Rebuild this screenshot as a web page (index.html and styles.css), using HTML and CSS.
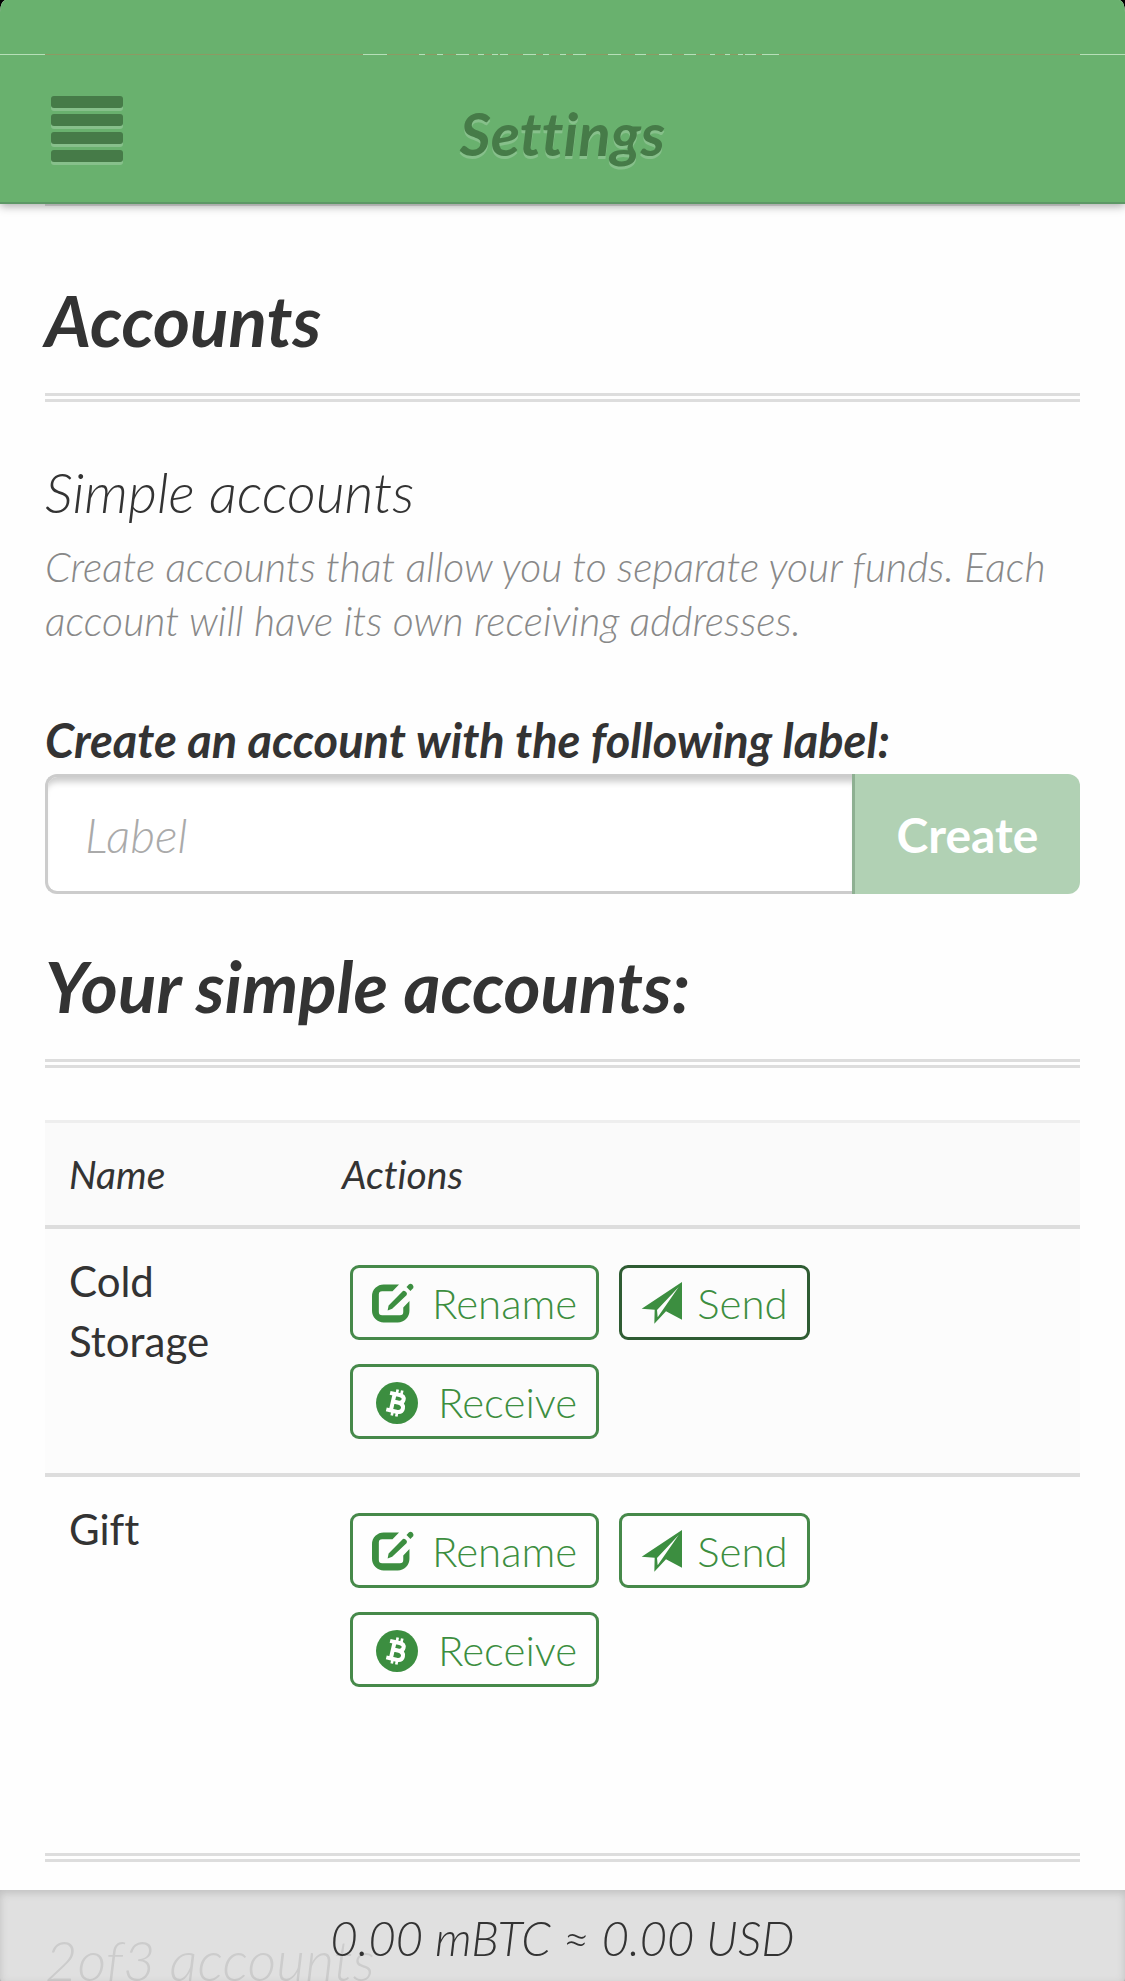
FILE: index.html
```html
<!DOCTYPE html>
<html lang="en">
<head>
    <meta charset="UTF-8">
    <meta name="viewport" content="width=device-width, initial-scale=1.0">
    <title>Settings</title>
    <link rel="stylesheet" href="styles.css">
</head>
<body>
    <!-- shared icons -->
    <svg class="sprite" aria-hidden="true">
        <symbol id="icon-edit" viewBox="0 0 129 126">
            <path d="M83 6H36A36 36 0 0 0 0 42V87A36 36 0 0 0 36 123H79A36 36 0 0 0 115 87V57L96 77V91A10 10 0 0 1 86 101H31A10 10 0 0 1 21 91V37A10 10 0 0 1 31 27H63Z"/>
            <path d="M48 86L51 71L95 26Q99 24 103 28L106 31Q109 35 106 39L62 81Z"/>
            <path d="M106 14L113 6Q118 2 124 6Q129 11 127 17L118 26Z"/>
        </symbol>
        <symbol id="icon-send" viewBox="0 0 126 126">
            <path d="M123 0L2 80L41 83L40 125L75 88L123 113ZM113 15L50 106L48 84Z" fill-rule="evenodd"/>
        </symbol>
        <symbol id="icon-bitcoin" viewBox="0 0 126 126">
            <circle cx="63" cy="63" r="63"/>
            <g transform="rotate(13 63 63)" fill="none" stroke="#fff">
                <path stroke-width="12" d="M36 38H65Q80 38 80 49Q80 61 65 61H51M65 61Q84 61 84 75Q84 89 67 89H36M50 38V89"/>
                <path stroke-width="8" d="M56 23V38M70 23V38M56 89V103M70 89V103"/>
            </g>
        </symbol>
    </svg>

    <div class="app">
        <header class="header">
            <div class="status-bar">
                <svg class="status-line" width="416" height="1" aria-hidden="true">
                    <path d="M0 .5H416" stroke="#b7dfb8" stroke-dasharray="24 32 6 12 6 13 13 9 6 8 6 2 8 15 13 7 6 11 6 7 13 22 13 14 11 13 13 12 12 14 5 10 5 8 5 2 11 6 17 9"/>
                </svg>
            </div>
            <div class="title-bar">
                <button class="menu-button" type="button" aria-label="Menu">
                    <span class="bar"></span>
                    <span class="bar"></span>
                    <span class="bar"></span>
                    <span class="bar"></span>
                </button>
                <h1 class="title">Settings</h1>
            </div>
        </header>

        <main class="content">
            <h2 class="section-title">Accounts</h2>

            <h3 class="subtitle">Simple accounts</h3>
            <p class="description">Create accounts that allow you to separate your funds. Each account will have its own receiving addresses.</p>

            <form class="create-form">
                <label class="form-label" for="label">Create an account with the following label:</label>
                <div class="input-group">
                    <input class="form-input" id="label" type="text" placeholder="Label">
                    <button class="create-button" type="submit" disabled>Create</button>
                </div>
            </form>

            <h2 class="section-title">Your simple accounts:</h2>

            <table class="accounts">
                <thead>
                    <tr>
                        <th class="name">Name</th>
                        <th>Actions</th>
                    </tr>
                </thead>
                <tbody>
                    <tr>
                        <td>Cold Storage</td>
                        <td>
                            <div class="actions">
                                <button class="action" type="button"><svg class="icon icon-edit"><use href="#icon-edit"/></svg>Rename</button>
                                <button class="action focused" type="button"><svg class="icon"><use href="#icon-send"/></svg>Send</button>
                                <button class="action" type="button"><svg class="icon icon-bitcoin"><use href="#icon-bitcoin"/></svg>Receive</button>
                            </div>
                        </td>
                    </tr>
                    <tr>
                        <td>Gift</td>
                        <td>
                            <div class="actions">
                                <button class="action" type="button"><svg class="icon icon-edit"><use href="#icon-edit"/></svg>Rename</button>
                                <button class="action" type="button"><svg class="icon"><use href="#icon-send"/></svg>Send</button>
                                <button class="action" type="button"><svg class="icon icon-bitcoin"><use href="#icon-bitcoin"/></svg>Receive</button>
                            </div>
                        </td>
                    </tr>
                </tbody>
            </table>

            <h3 class="subtitle next-section">2of3 accounts</h3>
        </main>

        <footer class="balance">0.00 mBTC ≈ 0.00 USD</footer>
    </div>
</body>
</html>
```
FILE: styles.css
```css
* {
    box-sizing: border-box;
}
html {
    background: #000;
}
body {
    margin: 0;
    font-family: Lato, sans-serif;
    font-size: 42px;
    font-variant-ligatures: none;
    line-height: 60px;
    color: #333;
}
button, input {
    font-family: inherit;
    margin: 0;
}
.sprite {
    display: none;
}
.app {
    height: 100vh;
    overflow: hidden;
    background: #fefefe;
    border-radius: 6px 6px 2px 2px / 12px 12px 4px 4px;
}

/* header */
.header {
    position: relative;
    background: #69b16e;
    border-bottom: 2px solid #5d9866;
    box-shadow: 0 2px 9px rgba(0, 0, 0, 0.35);
}
.status-bar {
    display: flex;
    align-items: flex-end;
    justify-content: center;
    height: 55px;
    background: linear-gradient(#8d9a63, #8d9a63) center bottom / calc(100% - 90px) 1px no-repeat,
                linear-gradient(#b7dfb8, #b7dfb8) center bottom / 100% 1px no-repeat;
}
.status-line {
    display: block;
    margin-left: 16px;
}
.title-bar {
    display: grid;
    grid-template-columns: 72px 1fr 72px;
    align-items: center;
    height: 147px;
    padding: 0 51px;
}
.menu-button {
    display: flex;
    flex-direction: column;
    gap: 6px;
    padding: 0;
    border: 0;
    background: none;
}
.bar {
    width: 72px;
    height: 12px;
    border-radius: 3px;
    background: #467b48;
    box-shadow: 0 3px 0 rgba(255, 255, 255, 0.2);
}
.title {
    margin: 9px 0 0;
    text-align: center;
    font-size: 60px;
    font-weight: 700;
    font-style: italic;
    color: #467b48;
    text-shadow: 0 3px 0 rgba(255, 255, 255, 0.2);
}

/* content */
.content {
    margin: 0 45px;
    padding-top: 22px;
    border-top: 2px solid #ddd;
}
.section-title {
    margin: 0 0 52px;
    padding: 50px 0 31px;
    border-bottom: 9px double #ddd;
    font-size: 71px;
    line-height: 84px;
    font-weight: 700;
    font-style: italic;
}
.subtitle {
    margin: 0 0 10px;
    font-size: 56px;
    line-height: 76px;
    font-weight: 300;
    font-style: italic;
}
.description {
    margin: 0;
    font-size: 41px;
    line-height: 54px;
    font-weight: 300;
    font-style: italic;
    color: #888;
}
.create-form {
    margin-top: 62px;
}
.form-label {
    display: block;
    margin-bottom: 4px;
    font-size: 47px;
    font-weight: 700;
    font-style: italic;
}
.input-group {
    display: flex;
    height: 120px;
}
.form-input {
    flex: 1;
    min-width: 0;
    padding: 0 37px;
    border: 3px solid #ccc;
    border-right: 0;
    border-radius: 12px 0 0 12px;
    background: #fff;
    box-shadow: inset 0 9px 6px -4px rgba(0, 0, 0, 0.2);
    font-size: 48px;
    font-weight: 300;
}
.form-input::placeholder {
    font-style: italic;
    color: #aaa;
}
.create-button {
    width: 228px;
    border: 0;
    border-left: 3px solid #8eb092;
    border-radius: 0 12px 12px 0;
    background: #b1d1b4;
    color: #fff;
    font-size: 48px;
    font-weight: 700;
}

/* accounts table */
.accounts {
    width: 100%;
    border-collapse: separate;
    border-spacing: 0;
    table-layout: fixed;
}
.accounts th {
    padding: 21px 24px;
    border-top: 3px solid #eee;
    border-bottom: 4px solid #ddd;
    background: #fafafa;
    text-align: left;
    font-size: 39px;
    font-weight: 400;
    font-style: italic;
}
.accounts .name {
    width: 273px;
}
.accounts td {
    padding: 22px 24px 0;
    vertical-align: top;
}
.accounts tbody tr:first-child td {
    border-bottom: 4px solid #ddd;
    background: #fcfcfc;
}
.actions {
    display: flex;
    flex-wrap: wrap;
    gap: 24px 20px;
    max-width: 520px;
    padding: 14px 8px 34px;
}
.action {
    display: flex;
    align-items: center;
    gap: 14px;
    height: 75px;
    padding: 0 19px;
    border: 3px solid #46894a;
    border-radius: 9px;
    background: none;
    color: #3c8e40;
    font-size: 42px;
    font-weight: 300;
}
.action.focused {
    border-color: #2f5c33;
}
.icon {
    width: 42px;
    height: 42px;
    fill: #3c8e40;
}
.icon-edit {
    margin-right: 4px;
}
.icon-bitcoin {
    margin: 3px 6px 0 4px;
}
.next-section {
    margin-top: 132px;
    padding-top: 60px;
    border-top: 9px double #ddd;
}

/* balance bar over the scrolled content */
.balance {
    position: fixed;
    right: 0;
    bottom: 0;
    left: 0;
    padding: 18px 0 13px;
    background: rgba(221, 221, 221, 0.9);
    box-shadow: inset 0 3px 9px rgba(0, 0, 0, 0.15);
    text-align: center;
    font-size: 47px;
    font-weight: 300;
    font-style: italic;
}
```
